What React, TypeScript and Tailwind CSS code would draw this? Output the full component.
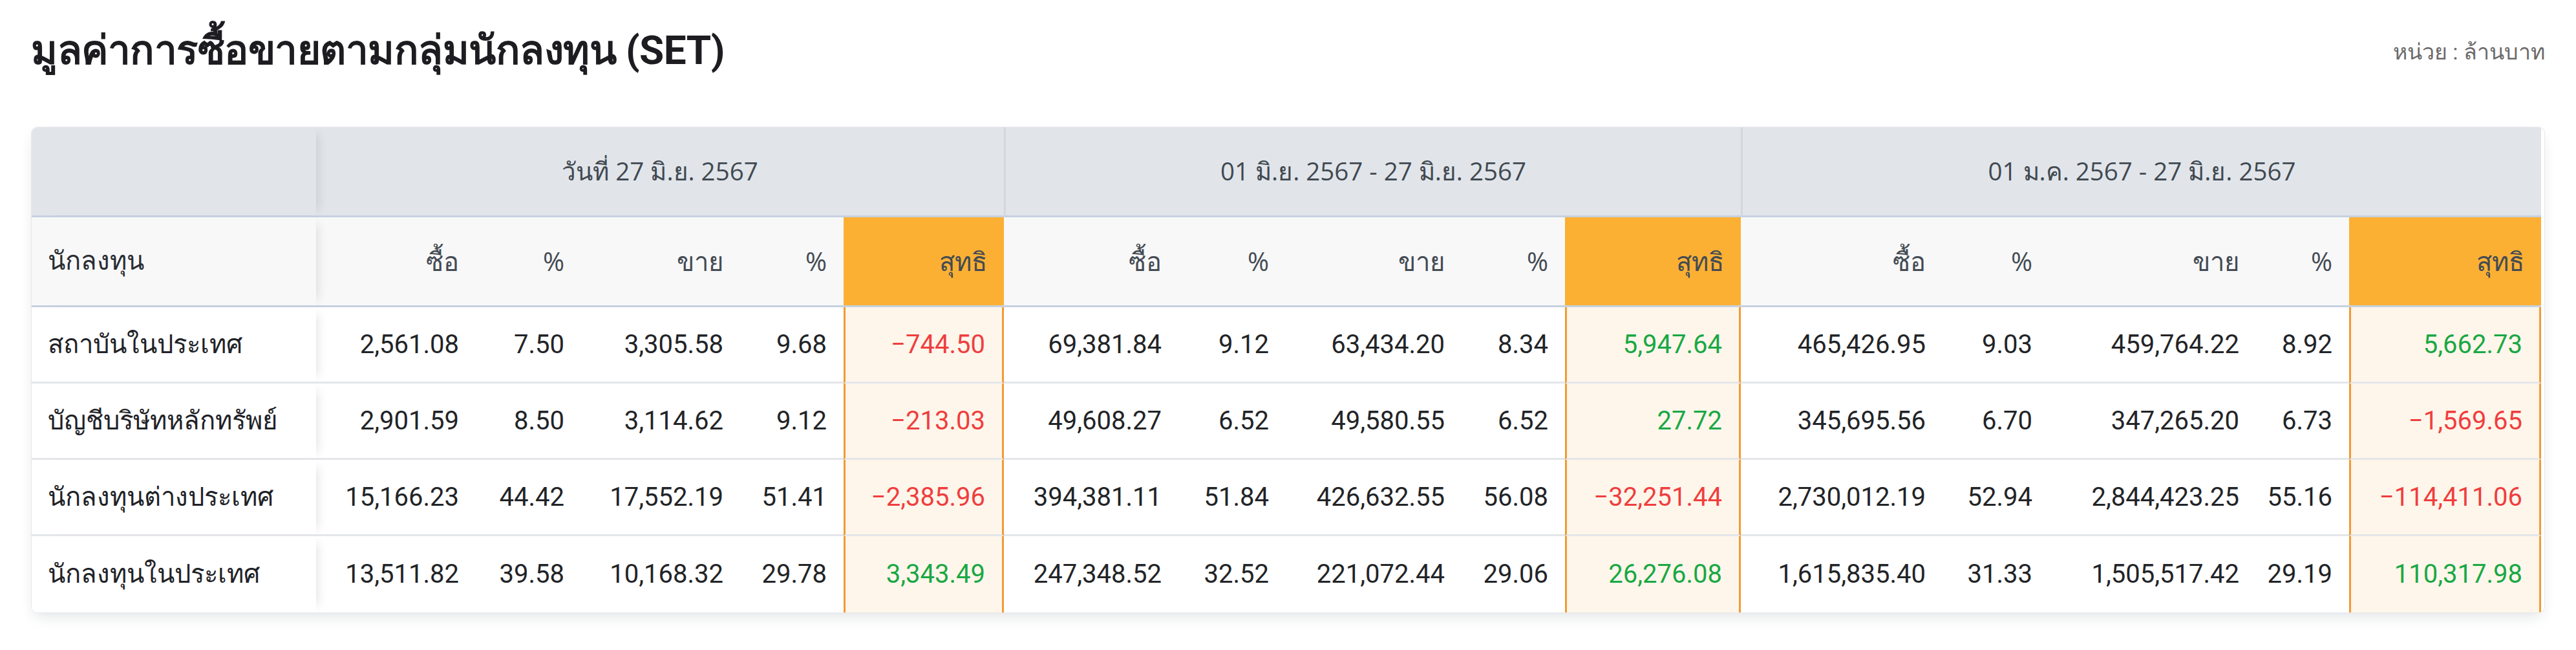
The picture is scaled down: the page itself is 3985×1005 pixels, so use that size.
import React from 'react';

interface RowData {
  name: string;
  values: [string, string, string, string, string][];
}

const groups = ['วันที่ 27 มิ.ย. 2567', '01 มิ.ย. 2567 - 27 มิ.ย. 2567', '01 ม.ค. 2567 - 27 มิ.ย. 2567'];

const rows: RowData[] = [
  {
    name: 'สถาบันในประเทศ',
    values: [
      ['2,561.08', '7.50', '3,305.58', '9.68', '-744.50'],
      ['69,381.84', '9.12', '63,434.20', '8.34', '5,947.64'],
      ['465,426.95', '9.03', '459,764.22', '8.92', '5,662.73'],
    ],
  },
  {
    name: 'บัญชีบริษัทหลักทรัพย์',
    values: [
      ['2,901.59', '8.50', '3,114.62', '9.12', '-213.03'],
      ['49,608.27', '6.52', '49,580.55', '6.52', '27.72'],
      ['345,695.56', '6.70', '347,265.20', '6.73', '-1,569.65'],
    ],
  },
  {
    name: 'นักลงทุนต่างประเทศ',
    values: [
      ['15,166.23', '44.42', '17,552.19', '51.41', '-2,385.96'],
      ['394,381.11', '51.84', '426,632.55', '56.08', '-32,251.44'],
      ['2,730,012.19', '52.94', '2,844,423.25', '55.16', '-114,411.06'],
    ],
  },
  {
    name: 'นักลงทุนในประเทศ',
    values: [
      ['13,511.82', '39.58', '10,168.32', '29.78', '3,343.49'],
      ['247,348.52', '32.52', '221,072.44', '29.06', '26,276.08'],
      ['1,615,835.40', '31.33', '1,505,517.42', '29.19', '110,317.98'],
    ],
  },
];

const colWidths = [
  440,
  247, 163, 246, 160, 248,
  270, 166, 272, 160, 272,
  312, 165, 320, 144, 297,
];

const subHeads = ['ซื้อ', '%', 'ขาย', '%'];

const stickyCol = 'sticky left-0 z-10 shadow-[14px_0_16px_-12px_rgba(0,0,0,0.12)]';

const App: React.FC = () => {
  return (
    <div className="w-[3985px] h-[1005px] bg-white px-[48px] pt-[36px] font-['Roboto','Noto_Sans',sans-serif]">
      <div className="flex items-center justify-between h-[84px]">
        <h1 className="text-[62px] font-bold text-[#1d1d21] leading-none tracking-[-0.5px]">
          มูลค่าการซื้อขายตามกลุ่มนักลงทุน (SET)
        </h1>
        <span className="text-[34px] text-[#6b6b6b] mt-[4px]">หน่วย : ล้านบาท</span>
      </div>

      <div className="mt-[76px] rounded-[10px] overflow-hidden border border-[#e6e8eb] shadow-[0_10px_22px_-6px_rgba(30,40,60,0.14)]">
        <table className="table-fixed border-separate border-spacing-0 w-[3882px] text-[40px]">
          <colgroup>
            {colWidths.map((w, i) => (
              <col key={i} style={{ width: w }} />
            ))}
          </colgroup>
          <thead>
            <tr>
              <th className={`${stickyCol} bg-[#e1e5ea] h-[139px] border-b-[3px] border-[#c6d1df]`}></th>
              {groups.map((g, i) => (
                <th
                  key={g}
                  colSpan={5}
                  className={`bg-[#e1e5ea] h-[139px] border-b-[3px] border-[#c6d1df] text-center text-[38.5px] font-normal text-[#414951] font-['Open_Sans','Noto_Sans',sans-serif] ${
                    i > 0 ? 'border-l-[3px] border-l-[#d2d7de]' : ''
                  }`}
                >
                  {g}
                </th>
              ))}
            </tr>
            <tr>
              <th className={`${stickyCol} bg-[#f8f8f9] h-[139px] border-b-[3px] border-[#c6d1df] text-left font-normal text-[#2a2e33] pl-[25px]`}>
                นักลงทุน
              </th>
              {groups.map((g) => (
                <React.Fragment key={g}>
                  {subHeads.map((s, j) => (
                    <th
                      key={j}
                      className="bg-[#f8f8f9] h-[139px] border-b-[3px] border-[#c6d1df] text-right font-normal text-[#444b53] pr-[26px] font-['Open_Sans','Noto_Sans',sans-serif]"
                    >
                      {s}
                    </th>
                  ))}
                  <th className="bg-[#fbb034] h-[139px] border-b-[3px] border-[#c6d1df] text-right font-normal text-[#444b53] pr-[26px] font-['Open_Sans','Noto_Sans',sans-serif]">
                    สุทธิ
                  </th>
                </React.Fragment>
              ))}
            </tr>
          </thead>
          <tbody>
            {rows.map((r, ri) => {
              const last = ri === rows.length - 1;
              const rowBorder = last ? '' : 'border-b-[3px] border-[#e4e6e9]';
              return (
                <tr key={r.name}>
                  <td className={`${stickyCol} bg-white h-[118px] pl-[25px] text-[#1f2328] ${rowBorder}`}>
                    {r.name}
                  </td>
                  {r.values.map((v, gi) => (
                    <React.Fragment key={gi}>
                      {v.slice(0, 4).map((cell, ci) => (
                        <td key={ci} className={`bg-white h-[118px] text-right pr-[26px] text-[#222427] ${rowBorder}`}>
                          {cell}
                        </td>
                      ))}
                      <td
                        className={`bg-[#fff6eb] h-[118px] text-right pr-[26px] border-l-[3px] border-r-[3px] border-l-[#f29a35] border-r-[#f29a35] ${
                          v[4].startsWith('-') ? 'text-[#ef3e3e]' : 'text-[#19a844]'
                        } ${rowBorder}`}
                      >
                        {v[4].replace('-', '\u2212')}
                      </td>
                    </React.Fragment>
                  ))}
                </tr>
              );
            })}
          </tbody>
        </table>
      </div>
    </div>
  );
};

export default App;
